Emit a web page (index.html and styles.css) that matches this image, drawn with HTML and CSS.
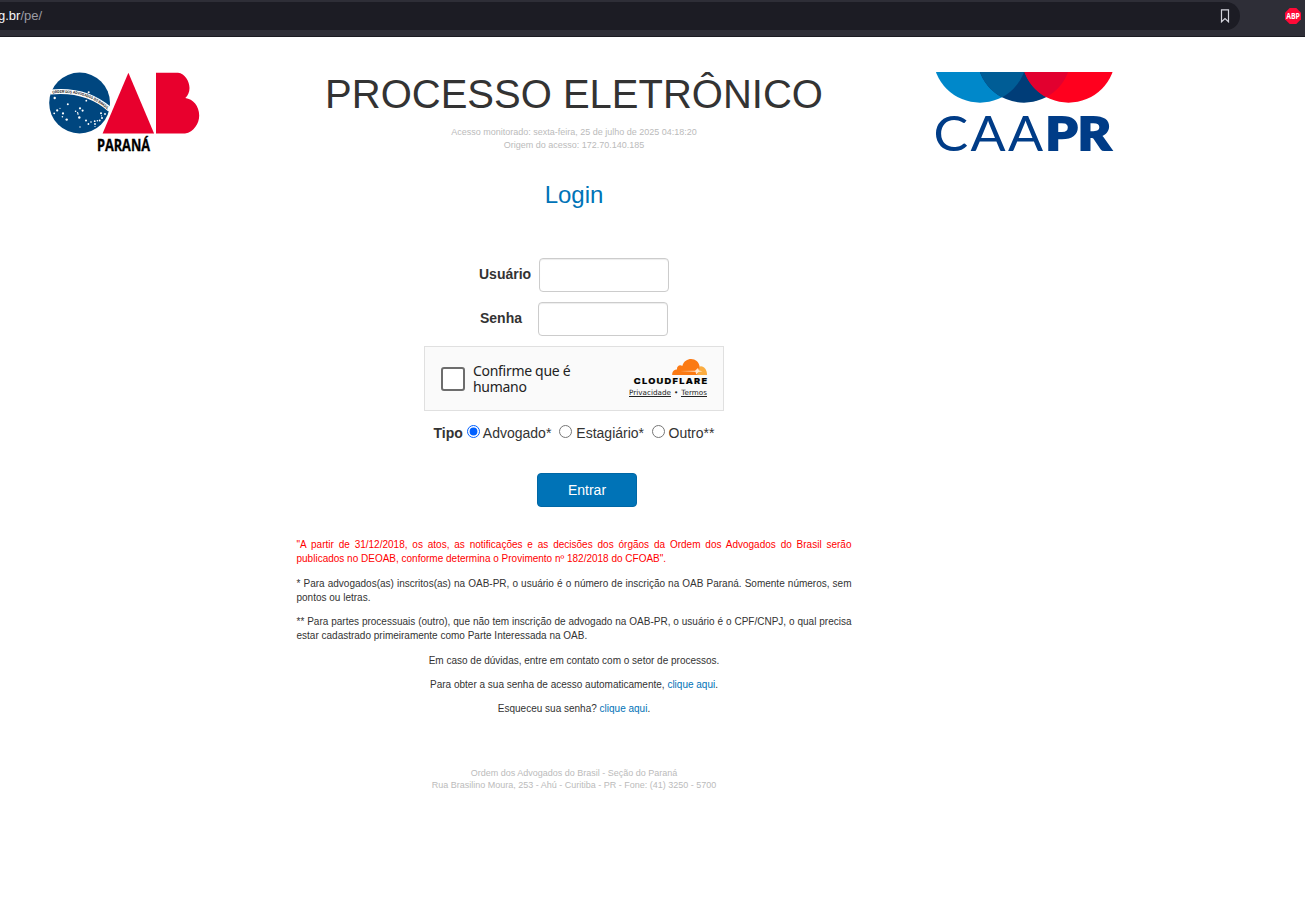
FILE: index.html
```html
<!DOCTYPE html>
<html lang="pt-BR">
<head>
<meta charset="utf-8">
<title>Processo Eletrônico</title>
<link rel="stylesheet" href="styles.css">
</head>
<body>
<div class="browser">
  <div class="address"><span class="url"><b>g.br</b>/pe/</span>
    <svg class="bookmark" width="10" height="14" viewBox="0 0 10 14"><path d="M1.5 .8h7v12L5 9.6 1.5 12.8z" fill="none" stroke="#d4d4dc" stroke-width="1.2"/></svg>
  </div>
  <svg class="abp" width="16" height="16" viewBox="0 0 16 16"><path d="M4.7 0h6.6L16 4.7v6.6L11.3 16H4.7L0 11.3V4.7z" fill="#ff0a37"/><text x="1.2" y="11" textLength="13.6" lengthAdjust="spacingAndGlyphs" font-family="Open Sans, sans-serif" font-weight="700" font-size="8.2" fill="#fff">ABP</text></svg>
</div>
<div class="page">
  <div class="side">
    <svg class="oab" width="152" height="90" viewBox="48 71 152 90">
      <circle cx="79.6" cy="103" r="30.4" fill="#00467f"/>
      <path d="M50.5 92.1Q86 88.5 110 109.5" fill="none" stroke="#fff" stroke-width="5"/>
      <path id="band" d="M52.5 93.5Q86 89.5 109 111" fill="none"/>
      <text font-family="Liberation Sans, sans-serif" font-weight="700" font-size="3.9" fill="#111"><textPath href="#band" textLength="59" lengthAdjust="spacingAndGlyphs">ORDEM DOS ADVOGADOS DO BRASIL</textPath></text>
      <g fill="#fff">
        <circle cx="54.7" cy="98" r="1.2"/><circle cx="88.7" cy="92.2" r="1"/><circle cx="67.8" cy="104.2" r="1"/>
        <circle cx="57.2" cy="110.4" r="1.1"/><circle cx="54.2" cy="113.3" r=".9"/><circle cx="63" cy="113.4" r="1.1"/><circle cx="62.4" cy="116.8" r=".8"/><circle cx="66.7" cy="119.6" r="1.2"/><circle cx="60" cy="108.3" r=".6"/>
        <circle cx="80" cy="108.3" r="1.1"/><circle cx="82.6" cy="110.6" r="1.1"/><circle cx="75.6" cy="111.2" r=".8"/><circle cx="78" cy="114" r=".8"/><circle cx="79.3" cy="117.5" r="1.2"/><circle cx="77.6" cy="112.7" r=".7"/><circle cx="86.3" cy="100.7" r=".9"/>
        <circle cx="86" cy="120.4" r="1"/><circle cx="88.4" cy="124" r=".9"/><circle cx="91" cy="122" r=".8"/><circle cx="94.7" cy="121.2" r=".9"/><circle cx="95" cy="124" r=".9"/><circle cx="97.4" cy="120.7" r=".8"/><circle cx="99.7" cy="120.5" r=".9"/><circle cx="102" cy="118" r="1"/><circle cx="101" cy="113.3" r="1"/><circle cx="105" cy="114" r=".9"/><circle cx="101.5" cy="115.8" r=".6"/><circle cx="80" cy="127" r=".7"/><circle cx="95" cy="126.5" r=".6"/>
      </g>
      <path d="M128.4 72.8L154.1 133.6H102.6z" fill="#e8002d"/>
      <path d="M156 72.7H178C185 73.5 189.5 81.5 189.5 88C189.5 92 188 95.5 185.3 98C193 99 199.2 106 199.2 115.5C199.2 123.5 194 131.8 185 133.6H156z" fill="#e8002d"/>
      <text x="96.9" y="151.1" textLength="53.2" lengthAdjust="spacingAndGlyphs" font-family="Open Sans, sans-serif" font-weight="700" font-size="15.2" fill="#000" stroke="#000" stroke-width=".3">PARANÁ</text>
    </svg>
  </div>
  <main class="main">
    <h1 class="title">PROCESSO ELETRÔNICO</h1>
    <div class="tiny">Acesso monitorado: sexta-feira, 25 de julho de 2025 04:18:20<br>Origem do acesso: 172.70.140.185</div>
    <h2 class="login">Login</h2>
    <form class="form">
      <div class="row"><label class="lab user">Usuário</label><input class="field" type="text"></div>
      <div class="row pass"><label class="lab">Senha</label><input class="field" type="password"></div>
      <div class="captcha">
        <span class="box"></span><span class="human">Confirme que é humano</span>
        <div class="cf">
          <svg width="80" height="28" viewBox="0 0 80 28">
            <path d="M37.2 17C37 13.5 39 11.6 42 11.5C41.5 8 45 6.2 47.3 8C48.8 3 52.5 1 56 1C60.5 1 63.8 4 64.6 8.2L66 17z" fill="#fb7a14"/>
            <path d="M62 17L65.3 8.3C69 7.8 72 11.5 72.1 17z" fill="#fbad41"/>
            <path d="M45 13.1L60 12.7 63 10 64 12.5 67.5 13.2 63.5 14 61.3 16.5 60.5 13.8z" fill="#ffe9d2"/>
            <text x="-1.2" y="25.8" textLength="74.5" lengthAdjust="spacingAndGlyphs" font-family="Inter, sans-serif" font-weight="800" font-size="8" letter-spacing="1.1" fill="#000" stroke="#000" stroke-width=".2">CLOUDFLARE</text>
          </svg>
          <div class="links"><u>Privacidade</u><i>•</i><u>Termos</u></div>
        </div>
      </div>
      <div class="types"><b>Tipo</b><input class="first" type="radio" name="t" checked><span>Advogado*</span><input class="gap" type="radio" name="t"><span>Estagiário*</span><input class="gap last" type="radio" name="t"><span>Outro**</span></div>
      <button class="btn" type="button">Entrar</button>
    </form>
    <div class="notes">
      <p class="red">"A partir de 31/12/2018, os atos, as notificações e as decisões dos órgãos da Ordem dos Advogados do Brasil serão publicados no DEOAB, conforme determina o Provimento nº 182/2018 do CFOAB".</p>
      <p>* Para advogados(as) inscritos(as) na OAB-PR, o usuário é o número de inscrição na OAB Paraná. Somente números, sem pontos ou letras.</p>
      <p>** Para partes processuais (outro), que não tem inscrição de advogado na OAB-PR, o usuário é o CPF/CNPJ, o qual precisa estar cadastrado primeiramente como Parte Interessada na OAB.</p>
      <p class="mid">Em caso de dúvidas, entre em contato com o setor de processos.</p>
      <p class="mid">Para obter a sua senha de acesso automaticamente, <a class="link">clique aqui</a>.</p>
      <p class="mid">Esqueceu sua senha? <a class="link">clique aqui</a>.</p>
    </div>
    <footer class="tiny foot">Ordem dos Advogados do Brasil - Seção do Paraná<br>Rua Brasilino Moura, 253 - Ahú - Curitiba - PR - Fone: (41) 3250 - 5700</footer>
  </main>
  <div class="side">
    <svg class="caa" width="180" height="98" viewBox="935 71 180 98">
      <defs><clipPath id="c"><rect x="935" y="72" width="180" height="40"/></clipPath>
      <clipPath id="l"><circle cx="980" cy="55.7" r="47"/></clipPath><clipPath id="r"><circle cx="1068.5" cy="55.7" r="47"/></clipPath></defs>
      <g clip-path="url(#c)">
        <circle cx="980" cy="55.7" r="47" fill="#0088ca"/><circle cx="1024" cy="55.7" r="47" fill="#003d78"/><circle cx="1068.5" cy="55.7" r="47" fill="#ff001e"/>
        <circle cx="1024" cy="55.7" r="47" fill="#005d96" clip-path="url(#l)"/><circle cx="1024" cy="55.7" r="47" fill="#e2002f" clip-path="url(#r)"/>
      </g>
      <g font-family="Lato, sans-serif" fill="#003c87">
        <text x="933.6" y="150.8" textLength="112" lengthAdjust="spacingAndGlyphs" letter-spacing="2.2" font-size="48.5">CAA</text>
        <text x="1045.6" y="149.7" textLength="65.5" lengthAdjust="spacingAndGlyphs" font-weight="900" font-size="45" stroke="#003c87" stroke-width="2">PR</text>
      </g>
    </svg>
  </div>
</div>
</body>
</html>
```
FILE: styles.css
```css
body { margin: 0; height: 914px; overflow: hidden; background: #fff; color: #333; font-family: "Liberation Sans", Arial, sans-serif; font-size: 14px; line-height: 20px; }
.browser { box-sizing: border-box; height: 37px; padding-top: 2px; border-bottom: 1px solid #1b1b22; background: #2e2e37; display: flex; }
.address { box-sizing: border-box; width: 1240px; height: 28px; border-radius: 0 14px 14px 0; background: #1c1c24; display: flex; align-items: center; justify-content: space-between; padding-right: 10px; }
.url { color: #9b9ba3; font-size: 13px; margin-left: -2px; }
.url b { color: #f5f5f8; font-weight: 400; }
.abp { margin: 6px 0 0 45px; flex: none; }
.page { display: grid; grid-template-columns: 296.5px 555px 1fr; }
.oab { display: block; margin: 34px 0 0 48px; }
.caa { display: block; margin: 34px 0 0 83.5px; }
.main { text-align: center; }
.title { margin: 35px 0 0; font-size: 40px; line-height: 44px; font-weight: 400; white-space: nowrap; }
.tiny { margin-top: 10px; font-size: 9px; line-height: 12.86px; color: #bbb; }
.login { margin: 30px 0 0; font-size: 24px; line-height: 26px; font-weight: 400; color: #0073b7; }
.form { display: flex; flex-direction: column; align-items: center; margin: 50px 0 0; }
.row { display: flex; }
.pass { margin-top: 10px; }
.lab { width: 58px; text-align: left; font-weight: 700; line-height: 32px; }
.user { width: 60px; }
.field { box-sizing: border-box; width: 130px; height: 34px; border: 1px solid #ccc; border-radius: 4px; box-shadow: inset 0 1px 1px rgba(0,0,0,.075); background: #fff; }
.captcha { box-sizing: border-box; width: 300px; height: 65px; margin-top: 10px; padding: 2px 16px 0; border: 1px solid #e0e0e0; background: #fafafa; display: flex; align-items: center; }
.box { box-sizing: border-box; width: 24px; height: 24px; border: 2px solid #6d6d6d; border-radius: 3px; background: #fff; }
.human { width: 120px; margin-left: 8px; text-align: left; font: 14px/16px "Noto Sans", sans-serif; letter-spacing: -.3px; color: #232323; }
.cf { margin-left: auto; width: 80px; height: 42px; }
.cf svg { display: block; margin-left: 8px; overflow: visible; }
.links { display: flex; justify-content: space-between; font: 7.2px/9px "DejaVu Sans", sans-serif; letter-spacing: .02px; margin: 2px 0 0 2px; color: #232323; }
.links u { text-decoration: none; border-bottom: 1px solid #232323; height: 8px; }
.links i { font-style: normal; }
.types { display: flex; align-items: center; margin-top: 12px; }
.types input { width: 13px; height: 13px; margin: -3px 4px 0 4px; accent-color: #0060ff; }
.types .first { margin-right: 3px; }
.types .gap { margin-left: 8px; }
.types .last { margin-right: 3.5px; }
.btn { box-sizing: border-box; width: 100px; height: 34px; margin: 30px 0 0 26px; border: 1px solid #0067a5; border-radius: 4px; background: #0073b7; color: #fff; font: 14px/20px "Liberation Sans", sans-serif; padding: 0; }
.notes { margin-top: 31.25px; font-size: 10px; line-height: 14.28px; text-align: justify; }
.notes p { margin: 0 0 10px; }
.notes .red { color: #f00; }
.notes .mid { text-align: center; }
.link { color: #0073b7; }
.foot { margin-top: 50.2px; line-height: 12px; }
```
